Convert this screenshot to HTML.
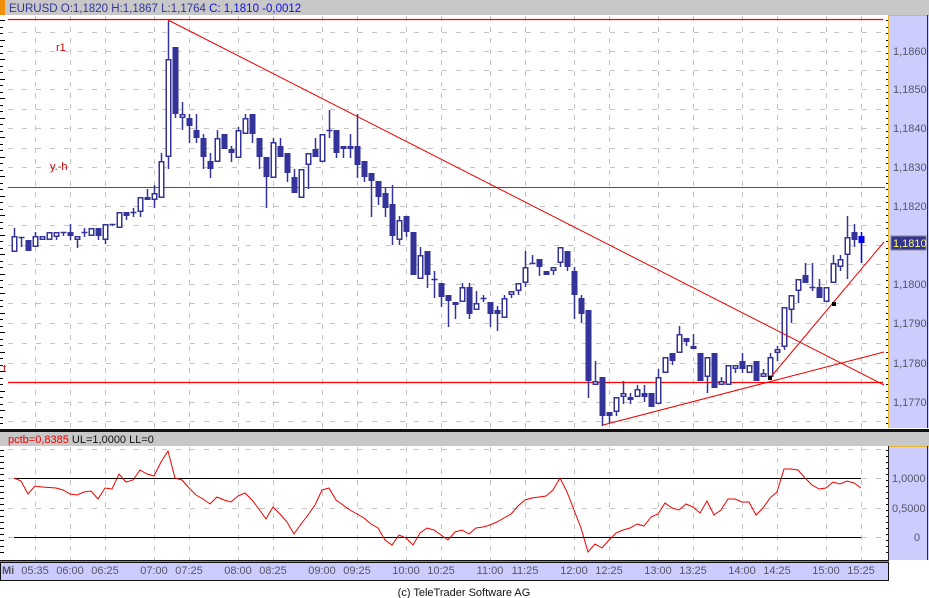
<!DOCTYPE html>
<html><head><meta charset="utf-8"><style>
body{margin:0;width:929px;height:598px;overflow:hidden;background:#fff;font-family:"Liberation Sans",sans-serif}
svg{display:block}
</style></head><body>
<svg id="s" width="929" height="598" xmlns="http://www.w3.org/2000/svg" font-family="Liberation Sans, sans-serif">
<rect width="929" height="598" fill="#fff"/>
<!-- header -->
<rect x="0" y="0" width="929" height="15" fill="#c8c8c8"/>
<rect x="0" y="0" width="5" height="15" fill="#f0900a"/>
<text x="9" y="12" font-size="11.5" fill="#333399">EURUSD O:1,1820 H:1,1867 L:1,1764 <tspan fill="#1010e0">C: 1,1810 -0,0012</tspan></text>
<!-- right price panel -->
<rect x="888" y="15" width="41" height="413" fill="#ccccff"/>
<line x1="888.5" y1="15" x2="888.5" y2="428" stroke="#e8b830"/>
<line x1="888" y1="15.5" x2="929" y2="15.5" stroke="#e8b830"/>
<line x1="927.5" y1="15" x2="927.5" y2="428" stroke="#222266"/>
<g id="grid"></g>
<g id="ticks"></g>
<g font-size="11" fill="#555566">
<text x="893" y="55">1,1860</text><text x="893" y="93">1,1850</text><text x="893" y="132">1,1840</text>
<text x="893" y="171">1,1830</text><text x="893" y="210">1,1820</text><text x="893" y="288">1,1800</text>
<text x="893" y="327">1,1790</text><text x="893" y="367">1,1780</text><text x="893" y="406">1,1770</text>
</g>
<rect x="891" y="236" width="35" height="14" fill="#333399" stroke="#888"/>
<text x="893" y="247" font-size="11" fill="#ffff66">1,1810</text>
<!-- overlays -->
<line x1="8" y1="19.5" x2="883" y2="19.5" stroke="#ff0000" stroke-width="1.2"/>
<line x1="8" y1="187.5" x2="885" y2="187.5" stroke="#cc2020" stroke-width="1"/>
<line x1="8" y1="382.5" x2="883" y2="382.5" stroke="#ff0000" stroke-width="1.2"/>
<text x="56" y="51" font-size="11" fill="#cc0000">r1</text>
<text x="50" y="170" font-size="11" fill="#cc0000">y.-h</text>
<text x="3" y="372" font-size="11" fill="#cc0000">t</text>
<g id="candles"></g>
<line x1="168" y1="20" x2="884" y2="385" stroke="#ee0000" stroke-width="1"/>
<line x1="603" y1="425" x2="884" y2="352" stroke="#ee0000" stroke-width="1"/>
<line x1="770" y1="378" x2="884" y2="242" stroke="#ee0000" stroke-width="1"/>
<rect x="768" y="376" width="4" height="4" fill="#000"/>
<rect x="832" y="302" width="4" height="4" fill="#000"/>
<!-- separator -->
<rect x="0" y="429" width="929" height="3" fill="#111"/>
<rect x="0" y="432" width="929" height="14" fill="#c8c8c8"/>
<text x="8" y="443" font-size="11" fill="#ee0000">pctb=0,8385 <tspan fill="#111">UL=1,0000 LL=0</tspan></text>
<rect x="888" y="446" width="41" height="114" fill="#ccccff"/>
<line x1="888" y1="446.5" x2="929" y2="446.5" stroke="#e8b830"/>
<line x1="888.5" y1="446" x2="888.5" y2="560" stroke="#222"/>
<line x1="927.5" y1="446" x2="927.5" y2="560" stroke="#222266"/>
<g font-size="11" fill="#555566">
<text x="892" y="482">1,0000</text><text x="892" y="512">0,5000</text><text x="914" y="541">0</text>
</g>
<g id="grid2"></g>
<line x1="14" y1="478.5" x2="861" y2="478.5" stroke="#000"/>
<line x1="14" y1="537.5" x2="861" y2="537.5" stroke="#000"/>
<polyline id="ind" fill="none" stroke="#ee0000" stroke-width="1"/>
<rect x="0" y="560" width="889" height="1.5" fill="#111"/>
<!-- time axis -->
<rect x="0.5" y="562.5" width="888" height="18" fill="#ccccff" stroke="#111"/>
<text x="2" y="574" font-size="11" font-weight="bold" fill="#555">Mi</text>
<g font-size="11" fill="#555566" text-anchor="middle">
<text x="35" y="574">05:35</text><text x="70" y="574">06:00</text><text x="105" y="574">06:25</text>
<text x="154" y="574">07:00</text><text x="189" y="574">07:25</text><text x="238" y="574">08:00</text>
<text x="273" y="574">08:25</text><text x="322" y="574">09:00</text><text x="357" y="574">09:25</text>
<text x="406" y="574">10:00</text><text x="441" y="574">10:25</text><text x="490" y="574">11:00</text>
<text x="525" y="574">11:25</text><text x="574" y="574">12:00</text><text x="609" y="574">12:25</text>
<text x="658" y="574">13:00</text><text x="693" y="574">13:25</text><text x="742" y="574">14:00</text>
<text x="777" y="574">14:25</text><text x="826" y="574">15:00</text><text x="861" y="574">15:25</text>
</g>
<text x="464" y="596" font-size="11" fill="#111" text-anchor="middle">(c) TeleTrader Software AG</text>
</svg>
<script>
var NS="http://www.w3.org/2000/svg";
function el(p,t,a){var e=document.createElementNS(NS,t);for(var k in a)e.setAttribute(k,a[k]);document.getElementById(p).appendChild(e);return e;}
var vx=[35,70,105,154,189,238,273,322,357,406,441,490,525,574,609,658,693,742,777,826,861];
var hy=[32,51,70,89,109,128,148,167,187,206,225,245,264,284,303,323,343,363,382,402,421];
hy.forEach(function(y){el("grid","line",{x1:8,x2:886,y1:y+.5,y2:y+.5,stroke:"#c4c4c4","stroke-dasharray":"5,9"});});
vx.forEach(function(x){el("grid","line",{x1:x+.5,x2:x+.5,y1:16,y2:428,stroke:"#c4c4c4","stroke-dasharray":"5,6"});
 el("grid2","line",{x1:x+.5,x2:x+.5,y1:447,y2:560,stroke:"#c4c4c4","stroke-dasharray":"5,6"});});
[449,478,508,537].forEach(function(y){el("grid2","line",{x1:8,x2:886,y1:y+.5,y2:y+.5,stroke:"#c4c4c4","stroke-dasharray":"5,9"});});
for(var y=20;y<428;y+=6.5){el("ticks","line",{x1:0,x2:(Math.round((y-20)/6.5)%3==0?5:3),y1:Math.round(y)+.5,y2:Math.round(y)+.5,stroke:"#000"});
 el("ticks","line",{x1:886,x2:888,y1:Math.round(y)+.5,y2:Math.round(y)+.5,stroke:"#000"});}
for(var y=450;y<558;y+=6){el("ticks","line",{x1:0,x2:4,y1:y+.5,y2:y+.5,stroke:"#000"});el("ticks","line",{x1:886,x2:888,y1:y+.5,y2:y+.5,stroke:"#000"});}
var C=[[228,252,236,252,0],[237,247,237,237,0],[240,251,240,251,1],[232,247,236,247,0],[236,240,236,240,0],[232,240,232,240,0],[232,240,232,237,0],[232,236,232,232,0],[224,240,232,236,1],[236,248,236,240,0],[228,237,232,232,0],[228,236,228,236,0],[228,240,228,236,1],[224,244,224,240,0],[224,226,224,224,0],[212,228,212,228,0],[212,220,212,216,1],[208,217,212,212,0],[197,217,197,212,0],[189,200,197,200,0],[185,208,193,200,0],[153,198,161,198,0],[21,169,59,157,0],[47,118,47,114,1],[102,130,114,118,0],[114,143,118,126,1],[114,143,130,138,1],[134,169,138,157,1],[153,178,161,169,1],[130,162,138,162,0],[134,149,134,149,1],[146,162,149,153,1],[127,158,130,158,0],[114,134,118,134,0],[114,143,114,134,1],[138,169,138,157,1],[157,208,157,177,1],[138,178,142,178,0],[138,157,146,157,1],[153,182,153,173,1],[169,193,177,193,1],[169,198,169,198,0],[153,189,153,165,0],[138,157,149,157,1],[134,162,134,162,0],[110,138,130,130,0],[130,158,130,153,1],[146,158,146,149,0],[134,158,146,149,1],[114,178,146,165,1],[161,182,161,177,1],[173,217,173,181,1],[181,205,181,197,1],[188,217,193,208,1],[185,245,204,236,1],[216,245,220,240,0],[216,237,216,232,1],[232,275,232,275,1],[247,279,255,279,0],[251,288,251,275,1],[271,298,279,279,0],[283,307,283,297,1],[295,327,295,301,1],[302,319,302,305,1],[283,302,287,302,0],[283,319,287,314,1],[291,310,303,310,0],[295,302,298,298,0],[302,327,302,314,1],[306,331,310,314,1],[295,318,298,318,0],[291,298,291,295,0],[283,295,283,291,0],[251,287,267,283,0],[255,263,263,263,0],[259,276,259,267,1],[271,275,271,275,1],[267,275,267,271,0],[247,267,247,263,0],[251,271,251,267,1],[267,319,271,295,1],[295,323,298,314,1],[310,398,310,381,1],[361,385,381,385,0],[377,426,377,416,1],[412,423,412,416,1],[397,416,397,412,0],[381,404,393,397,0],[393,404,397,400,1],[385,397,389,397,0],[385,402,393,397,1],[393,407,393,407,1],[369,404,377,404,0],[357,373,357,373,0],[353,365,353,361,1],[326,353,334,353,0],[338,346,338,342,1],[334,349,346,349,1],[353,381,353,381,1],[357,393,357,377,0],[353,388,353,388,1],[377,385,381,385,0],[365,385,365,385,0],[365,373,365,369,0],[353,373,361,369,1],[365,373,365,373,0],[361,381,361,381,1],[369,377,373,377,0],[353,377,357,377,0],[346,361,349,353,0],[307,350,307,347,0],[295,323,295,310,0],[279,303,279,291,0],[263,283,275,283,1],[263,291,287,287,0],[279,298,287,298,1],[287,302,287,302,0],[255,283,263,283,0],[255,271,259,267,0],[216,279,237,255,0],[224,247,232,240,1],[232,263,236,243,1]];
C.forEach(function(c,i){var x=14+7*i,col=(i==121?"#0000ee":"#333399");
 el("candles","line",{x1:x+.5,x2:x+.5,y1:c[0],y2:c[1],stroke:col,"stroke-width":1.5});
 if(c[2]==c[3]){el("candles","line",{x1:x-2.5,x2:x+3.5,y1:c[2]+.5,y2:c[2]+.5,stroke:col,"stroke-width":1.5});}
 else if(c[4]){el("candles","rect",{x:x-2.5,y:c[2],width:6,height:c[3]-c[2],fill:col});}
 else{el("candles","rect",{x:x-1.75,y:c[2]+.75,width:4.5,height:c[3]-c[2]-1.5,fill:"#fff",stroke:col,"stroke-width":1.5});}
});
var P=[[14,478],[21,481],[28,494],[35,486],[42,487],[56,488],[63,490],[70,494],[77,495],[84,492],[91,491],[98,499],[105,488],[112,489],[119,474],[126,482],[133,480],[140,470],[147,474],[154,476],[161,462],[168,451],[175,478],[182,480],[189,488],[196,495],[203,499],[210,504],[217,497],[224,500],[231,502],[238,496],[245,493],[252,500],[259,509],[266,519],[273,507],[280,514],[287,522],[294,534],[301,524],[308,515],[315,505],[322,490],[329,488],[336,500],[343,505],[350,510],[357,514],[364,518],[371,524],[378,528],[385,540],[392,545],[399,535],[406,538],[413,545],[420,533],[427,528],[434,530],[441,535],[448,540],[455,532],[462,530],[469,534],[476,528],[483,527],[490,525],[497,522],[504,518],[511,514],[518,506],[525,500],[532,498],[539,497],[546,496],[553,490],[560,478],[567,492],[574,510],[581,528],[588,552],[595,544],[602,548],[609,540],[616,533],[623,530],[630,528],[637,524],[644,526],[651,517],[658,514],[665,503],[672,508],[679,510],[686,504],[693,507],[700,513],[707,501],[714,515],[721,510],[728,499],[735,499],[742,502],[749,502],[756,515],[763,508],[770,498],[777,492],[784,469],[791,469],[798,470],[805,478],[812,485],[819,489],[826,488],[833,482],[840,484],[847,481],[854,483],[861,488]];
document.getElementById("ind").setAttribute("points",P.map(function(p){return p.join(",")}).join(" "));
</script>
</body></html>
